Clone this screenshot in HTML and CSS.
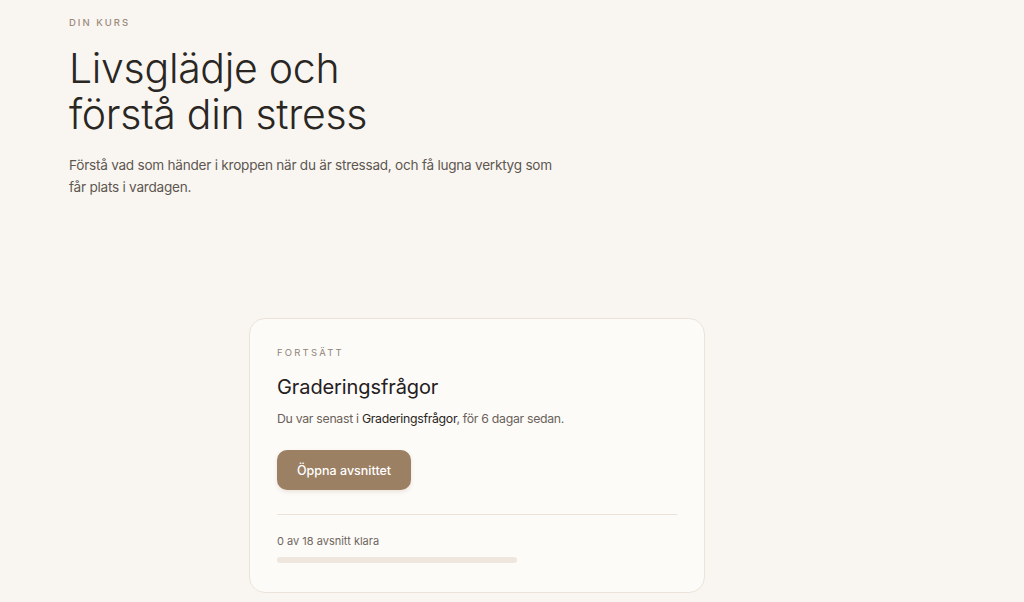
FILE: index.html
```html
<!DOCTYPE html>
<html lang="sv">
<head>
<meta charset="utf-8">
<title>Din kurs</title>
<link rel="stylesheet" href="styles.css">
</head>
<body>
<main class="page">
  <header class="hero">
    <p class="eyebrow">DIN KURS</p>
    <h1 class="title">Livsglädje och<br>förstå din stress</h1>
    <p class="lead">Förstå vad som händer i kroppen när du är stressad, och få lugna verktyg som får plats i vardagen.</p>
  </header>
  <section class="card">
    <p class="card-eyebrow">FORTSÄTT</p>
    <h2 class="card-title">Graderingsfrågor</h2>
    <p class="card-text">Du var senast i <span class="strong">Graderingsfrågor</span>, för 6 dagar sedan.</p>
    <button class="btn">Öppna avsnittet</button>
    <hr class="divider">
    <p class="progress-label">0 av 18 avsnitt klara</p>
    <div class="progress"><div class="progress-fill" style="width:0%"></div></div>
  </section>
</main>
</body>
</html>
```
FILE: styles.css
```css
* { box-sizing: border-box; }
html, body { margin: 0; padding: 0; }
body {
  background: #f9f6f2;
  font-family: Inter, "Noto Sans", sans-serif;
  color: #2a2622;
  overflow: hidden;
}
.page {
  max-width: 885px;
  padding: 16px 0 0 69px;
}
.hero { max-width: 500px; }
.eyebrow {
  margin: 0;
  font-size: 9.5px;
  letter-spacing: 2px;
  color: #9b8b7c;
  font-weight: 500;
  line-height: 14px;
}
.title {
  margin: 15px 0 0;
  font-size: 41px;
  line-height: 46px;
  font-weight: 300;
  letter-spacing: -0.3px;
  color: #2a2622;
}
.lead {
  margin: 17px 0 0;
  font-size: 13.6px;
  line-height: 22px;
  letter-spacing: -0.25px;
  color: #5e5750;
  max-width: 495px;
}
.card {
  width: 456px;
  margin: 120px auto 0;
  background: #fdfbf8;
  border: 1px solid #ebe3d9;
  border-radius: 16px;
  padding: 27px 27px 29px;
}
.card-eyebrow {
  margin: 0;
  font-size: 9.5px;
  letter-spacing: 2.2px;
  color: #8f8479;
  line-height: 14px;
}
.card-title {
  margin: 13px 0 0;
  font-size: 20px;
  line-height: 28px;
  font-weight: 400;
  letter-spacing: -0.1px;
  color: #23201d;
}
.card-text {
  margin: 9px 0 0;
  font-size: 12.3px;
  line-height: 18px;
  letter-spacing: -0.3px;
  color: #6a625a;
}
.strong { color: #2a2622; }
.btn {
  display: block;
  margin: 22px 0 0;
  height: 40px;
  padding: 0 20px;
  border: none;
  border-radius: 10px;
  background: #9c8063;
  color: #fff;
  font-family: inherit;
  font-size: 12.5px;
  font-weight: 500;
  box-shadow: 0 2px 4px rgba(120, 95, 70, 0.15);
}
.divider {
  margin: 24px 0 0;
  border: none;
  border-top: 1px solid #ebe3d9;
}
.progress-label {
  margin: 19px 0 0;
  font-size: 11px;
  line-height: 14px;
  color: #6f665e;
}
.progress {
  margin-top: 9px;
  width: 240px;
  height: 6px;
  border-radius: 3px;
  background: #efe7dd;
  overflow: hidden;
}
.progress-fill { height: 100%; background: #9c8063; }
```
